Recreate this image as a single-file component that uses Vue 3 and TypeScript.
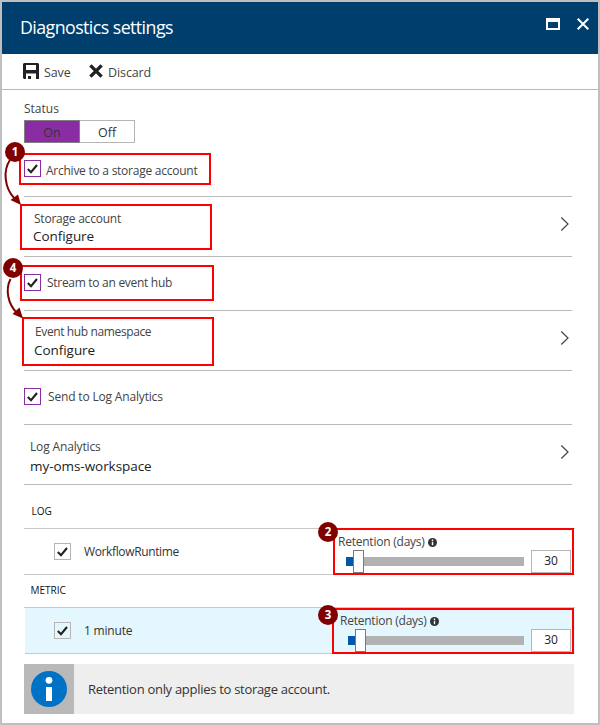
<script setup lang="ts">
import { ref } from 'vue'

interface Destination {
  id: string
  label: string
  title: string
  value: string
  checked: boolean
}

interface Category {
  id: string
  heading: string
  name: string
  days: number
  checked: boolean
}

const enabled = ref(true)

const destinations = ref<Destination[]>([
  { id: 'storage', label: 'Archive to a storage account', title: 'Storage account', value: 'Configure', checked: true },
  { id: 'hub', label: 'Stream to an event hub', title: 'Event hub namespace', value: 'Configure', checked: true },
  { id: 'oms', label: 'Send to Log Analytics', title: 'Log Analytics', value: 'my-oms-workspace', checked: true },
])

const categories = ref<Category[]>([
  { id: 'log', heading: 'LOG', name: 'WorkflowRuntime', days: 30, checked: true },
  { id: 'metric', heading: 'METRIC', name: '1 minute', days: 30, checked: true },
])

const callouts = [
  { n: 1, cls: 'c1' },
  { n: 2, cls: 'c2' },
  { n: 3, cls: 'c3' },
  { n: 4, cls: 'c4' },
]
</script>

<template>
  <div class="blade">
    <header class="head">
      <h1>Diagnostics settings</h1>
      <svg class="max" width="14" height="12" viewBox="0 0 14 12"><path d="M0 0H14V12H0ZM2 4V10H12V4Z" fill="#fff" fill-rule="evenodd" /></svg>
      <svg class="close" width="12" height="12" viewBox="0 0 12 12"><path d="M0.7 0.7L11.3 11.3M11.3 0.7L0.7 11.3" stroke="#fff" stroke-width="2" /></svg>
    </header>

    <div class="toolbar">
      <svg class="save-icon" width="16" height="16" viewBox="0 0 16 16">
        <path d="M1 0H15L16 1V16H13V10.5H3V16H1L0 15V1ZM3 2V7H13V2Z" fill="#222" fill-rule="evenodd" />
        <rect x="5" y="13" width="3" height="3" fill="#222" />
      </svg>
      <span class="save">Save</span>
      <svg class="discard-icon" width="14" height="14" viewBox="0 0 14 14"><path d="M1.4 1.4L12.6 12.6M12.6 1.4L1.4 12.6" stroke="#222" stroke-width="3.4" /></svg>
      <span class="discard">Discard</span>
    </div>

    <main class="content">
      <div class="status">Status</div>
      <div class="toggle">
        <span class="opt" :class="{ on: enabled }" @click="enabled = true">On</span>
        <span class="opt" :class="{ on: !enabled }" @click="enabled = false">Off</span>
      </div>

      <template v-for="d in destinations" :key="d.id">
        <div class="check-row" :class="d.id" @click="d.checked = !d.checked">
          <span class="box purple">
            <svg v-if="d.checked" width="11" height="10" viewBox="0 0 11 10"><path d="M0.8 5L4 8.2L10 1" fill="none" stroke="#222" stroke-width="2.1" /></svg>
          </span>
          <span class="text">{{ d.label }}</span>
        </div>
        <div class="config-row" :class="d.id">
          <div class="pair">
            <div class="title">{{ d.title }}</div>
            <div class="value">{{ d.value }}</div>
          </div>
          <svg class="chev" width="9" height="14" viewBox="0 0 9 14"><path d="M1.3 0.5L8 7L1.3 13.5" fill="none" stroke="#444" stroke-width="1.2" /></svg>
        </div>
      </template>

      <section v-for="c in categories" :key="c.id" :class="c.id">
        <div class="heading">{{ c.heading }}</div>
        <div class="cat-row">
          <span class="box" @click="c.checked = !c.checked">
            <svg v-if="c.checked" width="11" height="10" viewBox="0 0 11 10"><path d="M0.8 5L4 8.2L10 1" fill="none" stroke="#222" stroke-width="2.1" /></svg>
          </span>
          <span class="name">{{ c.name }}</span>
          <div class="retention">
            <div class="ret-label">
              <span>Retention (days)</span>
              <svg width="9" height="9" viewBox="0 0 9 9"><circle cx="4.5" cy="4.5" r="4.5" fill="#333" /><path d="M3.8 1.6H5.2V2.9H3.8ZM3.8 3.7H5.2V7.3H3.8Z" fill="#fff" /></svg>
            </div>
            <div class="control">
              <div class="slider"><i class="fill"></i><i class="thumb"></i><i class="track"></i></div>
              <div class="days">{{ c.days }}</div>
            </div>
          </div>
        </div>
      </section>

      <div class="note">
        <div class="note-icon">
          <svg width="36" height="36" viewBox="0 0 36 36"><circle cx="18" cy="18" r="18" fill="#0072c6" /><circle cx="18" cy="9.3" r="3.4" fill="#fff" /><rect x="15" y="16" width="6" height="14" fill="#fff" /></svg>
        </div>
        <span>Retention only applies to storage account.</span>
      </div>
    </main>

    <div class="mark m-archive"></div>
    <div class="mark m-storage"></div>
    <div class="mark m-stream"></div>
    <div class="mark m-hub"></div>
    <div class="mark m-log"></div>
    <div class="mark m-metric"></div>
    <svg class="arrows" width="30" height="180" viewBox="0 0 30 180">
      <g fill="none" stroke="#800000" stroke-width="2">
        <path d="M10 10C3 20 4 38 15 49" />
        <path d="M10.5 129C5 140 8 154 17 163" />
      </g>
      <path d="M21 55L10.5 50L18 44.5ZM23 168.5L12.5 164L19.5 157.5Z" fill="#800000" />
    </svg>
    <span v-for="k in callouts" :key="k.n" class="badge" :class="k.cls">{{ k.n }}</span>
  </div>
</template>

<style>
body {
  margin: 0;
}
</style>

<style scoped>
.blade {
  position: relative;
  box-sizing: border-box;
  width: 600px;
  height: 725px;
  border: 2px solid #bfbfbf;
  background: #fff;
  color: #444;
  font-family: "Open Sans", "Noto Sans", sans-serif;
  font-size: 12px;
  letter-spacing: -0.23px;
  overflow: hidden;
}
svg {
  display: block;
  flex: none;
}
.head {
  display: flex;
  height: 52px;
  background: #003e6e;
  color: #fff;
}
h1 {
  margin: 0 auto 0 18px;
  padding-top: 10px;
  font-size: 17.8px;
  font-weight: 400;
  line-height: 30px;
  letter-spacing: -0.56px;
}
.max {
  margin: 16px 17px 0 0;
}
.close {
  margin: 16px 9px 0 0;
}
.toolbar {
  display: flex;
  height: 35px;
  border-bottom: 1px solid #b9b9b9;
  font-size: 12.5px;
  line-height: 37px;
  letter-spacing: -0.1px;
}
.save-icon {
  margin: 9px 5px 0 21px;
}
.save {
  width: 45px;
}
.discard-icon {
  margin: 10px 5.5px 0 -0.5px;
}
.content {
  padding: 9px 23px 0 22px;
}
.status {
  height: 18px;
  line-height: 20px;
  letter-spacing: 0;
}
.toggle {
  display: flex;
  width: 111px;
  height: 23px;
  margin-top: 3px;
}
.opt {
  box-sizing: border-box;
  flex: 1;
  border: 1px solid #b5b5b5;
  border-left: 0;
  color: #333;
  line-height: 23px;
  text-align: center;
  font-size: 12.5px;
  letter-spacing: 0;
}
.opt.on {
  border: 1px solid #808080;
  background: #8a2da5;
}
.check-row {
  display: flex;
  box-sizing: border-box;
  height: 54px;
  width: 548px;
  padding-top: 17px;
  border-bottom: 1px solid #b9b9b9;
}
.box {
  display: flex;
  flex: none;
  align-items: center;
  justify-content: center;
  box-sizing: border-box;
  width: 17px;
  height: 17px;
  border: 1px solid #b5b5b5;
  background: #fff;
}
.box.purple {
  border-color: #8a2da5;
}
.metric .box {
  background: transparent;
}
.check-row .text {
  margin-left: 5px;
  line-height: 21px;
  letter-spacing: -0.25px;
}
.check-row.hub .text {
  margin-left: 6px;
  line-height: 18px;
  letter-spacing: -0.29px;
}
.check-row.oms .text {
  margin-left: 7px;
  line-height: 18px;
  letter-spacing: -0.17px;
}
.config-row {
  display: flex;
  justify-content: space-between;
  box-sizing: border-box;
  width: 548px;
  height: 60px;
  padding: 14px 3px 0 10px;
  border-bottom: 1px solid #b9b9b9;
}
.config-row.hub {
  padding: 13px 3px 0 11px;
}
.config-row.oms {
  padding-left: 6px;
}
.title {
  line-height: 16px;
}
.hub .title {
  letter-spacing: -0.38px;
}
.oms .title {
  letter-spacing: -0.15px;
}
.value {
  margin-left: -1px;
  color: #222;
  font-size: 13.5px;
  line-height: 18px;
  letter-spacing: -0.05px;
}
.hub .value {
  padding-top: 1px;
}
.oms .value {
  margin-left: 0;
  padding-top: 2px;
}
.chev {
  margin-top: 6px;
}
.hub .chev {
  margin-top: 7px;
}
.heading {
  box-sizing: border-box;
  height: 44px;
  padding: 18px 0 0 7.5px;
  border-bottom: 1px solid #c8c8c8;
  color: #111;
  font-size: 10px;
  font-weight: 500;
  line-height: 17px;
  letter-spacing: 0;
}
.metric .heading {
  height: 33px;
  padding: 7px 0 0 6.5px;
}
.cat-row {
  display: flex;
  box-sizing: border-box;
  height: 46px;
  padding: 0 4px 0 30px;
  border-bottom: 1px solid #c8c8c8;
  color: #333;
}
.metric .cat-row {
  margin-left: 1px;
  padding-left: 29px;
  background: #e4f7fe;
}
.cat-row .box {
  margin-top: 14px;
}
.name {
  margin-left: 13px;
  line-height: 46px;
  letter-spacing: -0.37px;
}
.metric .name {
  letter-spacing: -0.2px;
}
.retention {
  width: 233px;
  margin-left: auto;
  padding-top: 4px;
}
.metric .retention {
  width: 231px;
}
.ret-label {
  display: flex;
  align-items: center;
  gap: 3px;
  height: 16px;
  padding-top: 1px;
  color: #444;
  line-height: 16px;
}
.control {
  display: flex;
  justify-content: space-between;
  height: 23px;
  padding-left: 8px;
}
.slider {
  display: flex;
  align-items: center;
  width: 178px;
}
.metric .slider {
  width: 176px;
}
.fill {
  width: 7px;
  height: 9px;
  background: #0058ad;
}
.thumb {
  box-sizing: border-box;
  width: 11px;
  height: 23px;
  border: 1px solid #7a7a7a;
  background: #fff;
}
.track {
  flex: 1;
  height: 9px;
  background: #b2b2b2;
}
.days {
  box-sizing: border-box;
  width: 40px;
  border: 1px solid #b5b5b5;
  background: #fff;
  color: #222;
  line-height: 20px;
  text-align: center;
}
.note {
  display: flex;
  width: 550px;
  height: 50px;
  margin-top: 10px;
  background: #eee;
  color: #333;
  font-size: 13px;
  line-height: 50px;
  letter-spacing: -0.29px;
}
.note-icon {
  width: 43px;
  height: 43px;
  margin-right: 14px;
  padding: 7px 0 0 7px;
  background: #b9b9b9;
}
.mark {
  position: absolute;
  box-sizing: border-box;
  border: 2px solid #f00;
}
.m-archive { left: 17px; top: 151px; width: 192px; height: 32px; }
.m-storage { left: 18px; top: 202px; width: 192px; height: 46px; }
.m-stream { left: 18px; top: 263px; width: 194px; height: 36px; }
.m-hub { left: 20px; top: 315px; width: 192px; height: 49px; }
.m-log { left: 331px; top: 526px; width: 241px; height: 47px; }
.m-metric { left: 330px; top: 606px; width: 242px; height: 46px; }
.arrows {
  position: absolute;
  left: -2px;
  top: 148px;
}
.badge {
  position: absolute;
  width: 20px;
  height: 20px;
  border-radius: 50%;
  background: #800000;
  color: #fff;
  font-size: 11.5px;
  font-weight: 700;
  line-height: 20px;
  text-align: center;
  letter-spacing: 0;
}
.c1 { left: 3px; top: 140px; }
.c2 { left: 316px; top: 520px; }
.c3 { left: 316px; top: 603px; }
.c4 { left: 1px; top: 256px; }
</style>
